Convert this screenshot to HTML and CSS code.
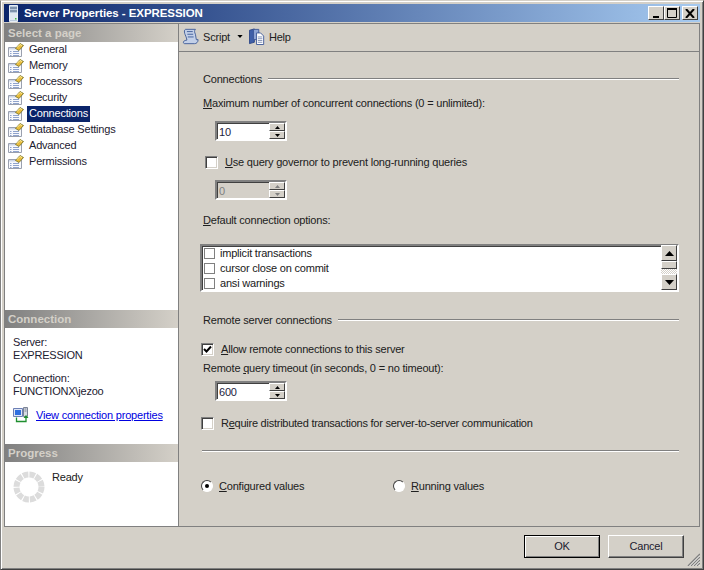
FILE: index.html
```html
<!DOCTYPE html>
<html lang="en">
<head>
<meta charset="utf-8">
<title>Server Properties - EXPRESSION</title>
<link rel="stylesheet" href="styles.css">
</head>
<body>
<svg class="defs" width="0" height="0" aria-hidden="true">
  <defs>
    <symbol id="page" viewBox="0 1 16 16">
      <path d="M0.500 6.500H13.500V15.500H0.500Z" fill="#f8f9fc" stroke="#9aa0ae"/>
      <path d="M1 7H8V8.500H1Z" fill="#cdd6e8"/>
      <path d="M2 10.500H3.500M5 10.500H11M2 12.500H3.500M5 12.500H11M2 14.500H3.500M5 14.500H11" stroke="#8fa3cc"/>
      <path d="M7.500 7.500L12 2.500L15.500 4.500L11 9.500Z" fill="#e8bb3c" stroke="#6f6a20" stroke-width=".8"/>
      <path d="M9 6.500L12 3.500L14 4.500" fill="none" stroke="#fff0a0"/>
    </symbol>
    <symbol id="spin-up" viewBox="0 0 5 3"><path d="M2.500 0L5 3H0Z"/></symbol>
    <symbol id="spin-down" viewBox="0 0 5 3"><path d="M0 0H5L2.500 3Z"/></symbol>
  </defs>
</svg>
<div class="window">
  <header class="titlebar">
    <svg class="title-icon" width="14" height="17" viewBox="0 0 14 17">
      <path d="M2.500 .5H10.500V16.500H2.500Z" fill="#b9c9dc" stroke="#e6edf5"/>
      <path d="M3 2H10V4H3ZM3 5H10V7H3Z" fill="#7f93ad"/>
      <path d="M3 8H10V15H3Z" fill="#dfe7f0"/>
      <path d="M8 13h1.500v1.500H8Z" fill="#3fbf3f"/>
    </svg>
    <span class="title-text">Server Properties - EXPRESSION</span>
    <div class="caption-buttons">
      <span class="caption-btn"><svg width="9" height="9" viewBox="0 0 9 9"><path d="M1 7H7V9H1Z"/></svg></span>
      <span class="caption-btn"><svg width="11" height="10" viewBox="0 0 11 10"><path d="M.5 1.500H9.500V9.500H.5Z" fill="none" stroke="#000"/><path d="M0 0H10V2H0Z"/></svg></span>
      <span class="caption-btn caption-close"><svg width="10" height="9" viewBox="0 0 10 9"><path d="M1 0L9 9M9 0L1 9" stroke="#000" stroke-width="2" fill="none"/></svg></span>
    </div>
  </header>

  <div class="body">
    <aside class="sidebar">
      <section class="side-pages">
        <h2 class="side-head">Select a page</h2>
        <ul class="pages">
          <li class="page"><svg class="page-icon"><use href="#page"/></svg><span class="page-name">General</span></li>
          <li class="page"><svg class="page-icon"><use href="#page"/></svg><span class="page-name">Memory</span></li>
          <li class="page"><svg class="page-icon"><use href="#page"/></svg><span class="page-name">Processors</span></li>
          <li class="page"><svg class="page-icon"><use href="#page"/></svg><span class="page-name">Security</span></li>
          <li class="page"><svg class="page-icon"><use href="#page"/></svg><span class="page-name selected">Connections</span></li>
          <li class="page"><svg class="page-icon"><use href="#page"/></svg><span class="page-name">Database Settings</span></li>
          <li class="page"><svg class="page-icon"><use href="#page"/></svg><span class="page-name">Advanced</span></li>
          <li class="page"><svg class="page-icon"><use href="#page"/></svg><span class="page-name">Permissions</span></li>
        </ul>
      </section>
      <section class="side-connection">
        <h2 class="side-head">Connection</h2>
        <div class="conn-body">
          <p class="conn-text">Server:<br>EXPRESSION</p>
          <p class="conn-text">Connection:<br>FUNCTIONX\jezoo</p>
          <div class="conn-link">
            <svg width="16" height="16" viewBox="0 0 16 16">
              <path d="M.5 1.500H9.500V9.500H.5Z" fill="#dfe6f5" stroke="#6c7fb5"/>
              <path d="M2 3H8V8H2Z" fill="#2f6fe0"/>
              <path d="M10.500 .5H14.500V9.500H10.500Z" fill="#d8dce4" stroke="#7c8496"/>
              <path d="M11.500 2H13.500M11.500 4H13.500" stroke="#7c8496"/>
              <path d="M3.500 10.500V14.500H13V10" fill="none" stroke="#1f8f2f" stroke-width="1.300"/>
              <path d="M13 8L15.500 11H10.500Z" fill="#1f8f2f"/>
            </svg>
            <a class="link" href="#">View connection properties</a>
          </div>
        </div>
      </section>
      <section class="side-progress">
        <h2 class="side-head">Progress</h2>
        <div class="progress-body">
          <svg width="32" height="32" viewBox="0 0 32 32">
            <circle cx="16" cy="16" r="12.500" fill="none" stroke="#dcdcdc" stroke-width="6" stroke-dasharray="5.500 1.050"/>
          </svg>
          <span class="ready">Ready</span>
        </div>
      </section>
    </aside>

    <main class="content">
      <nav class="toolbar">
        <span class="tool tool-script">
          <svg width="17" height="17" viewBox="0 0 19 19">
            <path d="M4 1.500H15C13.500 3 14 5 15 7L16 13H18C18 16 16 17.500 14 17.500H3C1 17.500 1 14.500 3.500 14L5.500 13.500C5 10 3.500 8 3 6C2.500 4 2.500 2 4 1.500Z" fill="#c3d0e8" stroke="#3c5a96"/>
            <path d="M5.500 4H12M6 7H12.500M6.500 10H13" stroke="#3c5a96"/>
          </svg>
          <span>Script</span>
          <svg class="tool-caret" width="6" height="3" viewBox="0 0 7 4"><path d="M0 0H7L3.500 4Z"/></svg>
        </span>
        <span class="tool tool-help">
          <svg width="16" height="17" viewBox="0 0 18 19">
            <path d="M.5 2.500L6 1V16L.5 17.500Z" fill="#3f5fa8" stroke="#2a4484"/>
            <path d="M5 1.500H11V13H5Z" fill="#8ea4d4" stroke="#3a5596"/>
            <path d="M8.500 5.500H13L16.500 9V18.500H8.500Z" fill="#fff" stroke="#3a5596"/>
            <path d="M10 10H15M10 12H15M10 14H15M10 16H15" stroke="#7a8ab0"/>
          </svg>
          <span>Help</span>
        </span>
      </nav>

      <div class="form">
        <div class="group-head group-first"><span>Connections</span><i class="etched"></i></div>
        <label class="field-label row-max"><u>M</u>aximum number of concurrent connections (0 = unlimited):</label>
        <div class="spinner spin-max">
          <span class="spin-value">10</span>
          <span class="spin-buttons">
            <span class="spin-btn"><svg width="5" height="3"><use href="#spin-up"/></svg></span>
            <span class="spin-btn"><svg width="5" height="3"><use href="#spin-down"/></svg></span>
          </span>
        </div>
        <label class="check-row row-gov"><span class="check"></span><span><u>U</u>se query governor to prevent long-running queries</span></label>
        <div class="spinner spinner-disabled spin-gov">
          <span class="spin-value">0</span>
          <span class="spin-buttons">
            <span class="spin-btn"><svg width="5" height="3"><use href="#spin-up"/></svg></span>
            <span class="spin-btn"><svg width="5" height="3"><use href="#spin-down"/></svg></span>
          </span>
        </div>
        <label class="field-label row-default"><u>D</u>efault connection options:</label>
        <div class="listbox">
          <ul class="options">
            <li class="option"><span class="opt-check"></span>implicit transactions</li>
            <li class="option"><span class="opt-check"></span>cursor close on commit</li>
            <li class="option"><span class="opt-check"></span>ansi warnings</li>
          </ul>
          <div class="scrollbar">
            <span class="sb-btn"><svg width="9" height="5" viewBox="0 0 9 5"><path d="M4.500 0L9 5H0Z"/></svg></span>
            <span class="sb-thumb"></span>
            <span class="sb-track"></span>
            <span class="sb-btn"><svg width="9" height="5" viewBox="0 0 9 5"><path d="M0 0H9L4.500 5Z"/></svg></span>
          </div>
        </div>
        <div class="group-head group-remote"><span>Remote server connections</span><i class="etched"></i></div>
        <label class="check-row row-allow"><span class="check check-on"><svg width="9" height="9" viewBox="0 0 9 9"><path d="M1 4L3.500 6.500L8 1.500" fill="none" stroke="#000" stroke-width="2"/></svg></span><span><u>A</u>llow remote connections to this server</span></label>
        <label class="field-label row-timeout">Remote <u>q</u>uery timeout (in seconds, 0 = no timeout):</label>
        <div class="spinner spin-timeout">
          <span class="spin-value">600</span>
          <span class="spin-buttons">
            <span class="spin-btn"><svg width="5" height="3"><use href="#spin-up"/></svg></span>
            <span class="spin-btn"><svg width="5" height="3"><use href="#spin-down"/></svg></span>
          </span>
        </div>
        <label class="check-row row-require"><span class="check"></span><span class="tight">R<u>e</u>quire distributed transactions for server-to-server communication</span></label>
        <i class="etched etched-full"></i>
        <div class="radios">
          <label class="radio-row radio-configured"><span class="radio radio-on"></span><span><u>C</u>onfigured values</span></label>
          <label class="radio-row"><span class="radio"></span><span><u>R</u>unning values</span></label>
        </div>
      </div>
    </main>
  </div>

  <footer class="footer">
    <button class="btn btn-default" type="button">OK</button>
    <button class="btn" type="button">Cancel</button>
    <svg class="grip" width="13" height="13" viewBox="0 0 13 13">
      <path d="M13 1L1 13M13 4L4 13M13 7L7 13M13 10L10 13" stroke="#808080" stroke-width="1.500" fill="none"/>
      <path d="M13 2.500L2.500 13M13 5.500L5.500 13M13 8.500L8.500 13M13 11.500L11.500 13" stroke="#fff" stroke-width=".8" fill="none"/>
    </svg>
  </footer>
</div>
</body>
</html>
```
FILE: styles.css
```css
* { box-sizing: border-box; }
html, body { margin: 0; padding: 0; }
body {
  width: 704px;
  height: 570px;
  overflow: hidden;
  font: 11px/14px "Liberation Sans", Arial, sans-serif;
  letter-spacing: -0.2px;
  color: #202020;
}
.defs { position: absolute; }
u { text-decoration: underline; }
ul { list-style: none; margin: 0; padding: 0; }
p, h2 { margin: 0; }
.tight { letter-spacing: -0.25px; }

.window {
  width: 704px;
  height: 570px;
  display: flex;
  flex-direction: column;
  background: #d4d0c8;
  padding: 3px 4px 0;
  border-top: 1px solid #d4d0c8;
  border-left: 1px solid #808080;
  border-right: 1px solid #404040;
  border-bottom: 1px solid #404040;
  box-shadow: inset 1px 1px 0 #fff, inset -1px -1px 0 #808080;
}

.titlebar {
  flex: none;
  height: 18px;
  margin-left: -1px;
  margin-right: -1px;
  display: flex;
  align-items: center;
  padding: 0 2px 0 3px;
  background: linear-gradient(90deg, #0a246a, #a6caf0);
  color: #fff;
}
.title-icon { flex: none; margin-right: 3px; }
.title-text { font-weight: 700; font-size: 11.5px; letter-spacing: -0.07px; }
.caption-buttons { margin-left: auto; display: flex; }
.caption-btn {
  width: 16px;
  height: 14px;
  display: flex;
  align-items: center;
  justify-content: center;
  background: #d4d0c8;
  border: 1px solid;
  border-color: #fff #404040 #404040 #fff;
}
.caption-close { margin-left: 2px; }

.body {
  flex: none;
  height: 504px;
  margin: 1px -1px 0;
  display: flex;
  border: 1px solid #808080;
}

.sidebar {
  flex: none;
  width: 174px;
  background: #fff;
  border-right: 1px solid #808080;
  display: flex;
  flex-direction: column;
}
.side-head {
  height: 18px;
  padding-left: 3px;
  font: 700 11.5px/18px "Liberation Sans", Arial, sans-serif;
  letter-spacing: 0;
  color: #d4d0c8;
  background: linear-gradient(90deg, #808080, #d4d0c8);
}
.side-pages { height: 286px; flex: none; }
.side-connection { height: 134px; flex: none; }
.side-progress { flex: 1; }
.page {
  height: 16px;
  display: flex;
  align-items: stretch;
  padding-left: 3px;
}
.page-icon { width: 16px; height: 16px; flex: none; margin-right: 3px; }
.page-name { padding: 0 2px; line-height: 15px; color: #1c2030; }
.selected { background: #0a246a; color: #fff; }

.conn-body { padding: 8px 8px 0; }
.conn-text { line-height: 13px; margin-bottom: 10px; color: #1c2030; }
.conn-link { display: flex; align-items: center; gap: 7px; margin-top: -1px; }
.link { color: #0000e0; text-decoration: underline; white-space: nowrap; }

.progress-body { display: flex; padding: 9px 0 0 8px; gap: 7px; }
.ready { margin-top: -1px; line-height: 14px; }

.content { flex: 1; display: flex; flex-direction: column; min-width: 0; }
.toolbar {
  flex: none;
  height: 28px;
  padding: 4px 0 0 3px;
  display: flex;
  align-items: flex-start;
  gap: 6px;
  border-bottom: 1px solid #808080;
}
.tool { display: flex; align-items: center; height: 17px; }
.tool > span { margin-left: 4px; }
.tool-caret { margin-left: 7px; }
.tool-help > span { margin-left: 4px; }

.form { flex: 1; padding: 0 20px 0 21px; display: flex; flex-direction: column; }
.group-head { display: flex; align-items: center; height: 14px; gap: 6px; margin-left: 3px; }
.group-first { margin-top: 20px; }
.etched {
  display: block;
  flex: 1;
  height: 2px;
  background: #808080;
  border-bottom: 1px solid #fff;
}
.field-label { display: block; height: 14px; margin-left: 3px; }
.row-max { margin-top: 10px; }

.spinner {
  flex: none;
  width: 72px;
  height: 20px;
  margin-left: 15px;
  display: flex;
  background: #fff;
  border: 2px solid;
  border-color: #808080 #fff #fff #808080;
  box-shadow: inset 1px 1px 0 #404040;
}
.spin-value { flex: 1; padding: 1px 0 0 2px; line-height: 16px; color: #1c1c40; }
.spin-buttons { width: 16px; display: flex; flex-direction: column; }
.spin-btn {
  flex: 1;
  display: flex;
  align-items: center;
  justify-content: center;
  background: #d4d0c8;
  border: 1px solid;
  border-color: #fff #404040 #404040 #fff;
}
.spin-btn svg { display: block; }
.spin-max { margin-top: 11px; }
.spinner-disabled { background: #d4d0c8; }
.spinner-disabled .spin-value { color: #808080; }
.spinner-disabled svg { fill: #808080; }
.spin-gov { margin-top: 11px; }
.spin-timeout { margin-top: 6px; }

.check-row { display: flex; align-items: center; height: 14px; }
.check {
  flex: none;
  width: 13px;
  height: 13px;
  margin-right: 7px;
  background: #fff;
  border: 1px solid;
  border-color: #808080 #fff #fff #808080;
  box-shadow: inset 1px 1px 0 #404040, inset -1px -1px 0 #d4d0c8;
  display: flex;
  align-items: center;
  justify-content: center;
}
.row-gov { margin-top: 14px; margin-left: 5px; }
.row-default { margin-top: 13px; }
.row-allow { margin-top: 15px; margin-left: 1px; }
.row-timeout { margin-top: 5px; }
.row-require { margin-top: 15px; margin-left: 1px; }

.listbox {
  flex: none;
  margin-top: 17px;
  height: 48px;
  width: 479px;
  display: flex;
  background: #fff;
  border: 2px solid;
  border-color: #808080 #fff #fff #808080;
  box-shadow: inset 1px 1px 0 #404040;
}
.options { flex: 1; }
.option { display: flex; align-items: center; height: 15px; padding-left: 2px; gap: 5px; line-height: 13px; }
.opt-check { flex: none; width: 11px; height: 11px; border: 1px solid #808080; }
.scrollbar { flex: none; width: 16px; display: flex; flex-direction: column; margin-top: -1px; }
.sb-btn {
  flex: none;
  height: 16px;
  display: flex;
  align-items: center;
  justify-content: center;
  background: #d4d0c8;
  border: 1px solid;
  border-color: #fff #404040 #404040 #fff;
}
.sb-thumb {
  flex: none;
  height: 8px;
  background: #d4d0c8;
  border: 1px solid;
  border-color: #fff #404040 #404040 #fff;
}
.sb-track {
  flex: 1;
  background: repeating-conic-gradient(#d4d0c8 0 25%, #fff 0 50%) 0 0 / 2px 2px;
}

.group-remote { margin-top: 21px; }
.etched-full { flex: none; margin: 20px 0 0 2px; }
.radios { display: flex; margin-top: 27px; }
.radio-row { display: flex; align-items: center; height: 14px; margin-left: 1px; }
.radio-configured { width: 191px; }
.radio {
  flex: none;
  width: 12px;
  height: 12px;
  margin-right: 6px;
  border-radius: 50%;
  background: #fff;
  border: 1px solid;
  border-color: #404040 #fff #fff #404040;
  display: flex;
  align-items: center;
  justify-content: center;
}
.radio-on::after { content: ""; width: 4px; height: 4px; border-radius: 50%; background: #000; }

.footer {
  flex: 1;
  position: relative;
  display: flex;
  justify-content: flex-end;
  align-items: flex-start;
  gap: 8px;
  padding: 8px 15px 0 0;
}
.btn {
  width: 76px;
  height: 23px;
  padding: 0 0 2px;
  font: inherit;
  letter-spacing: inherit;
  color: #1c2030;
  background: #d4d0c8;
  border: 1px solid;
  border-color: #fff #404040 #404040 #fff;
  box-shadow: inset -1px -1px 0 #808080;
}
.btn-default {
  border-color: #000;
  box-shadow: inset 1px 1px 0 #fff, inset -1px -1px 0 #808080;
}
.grip { position: absolute; right: -1px; bottom: 3px; }
```
